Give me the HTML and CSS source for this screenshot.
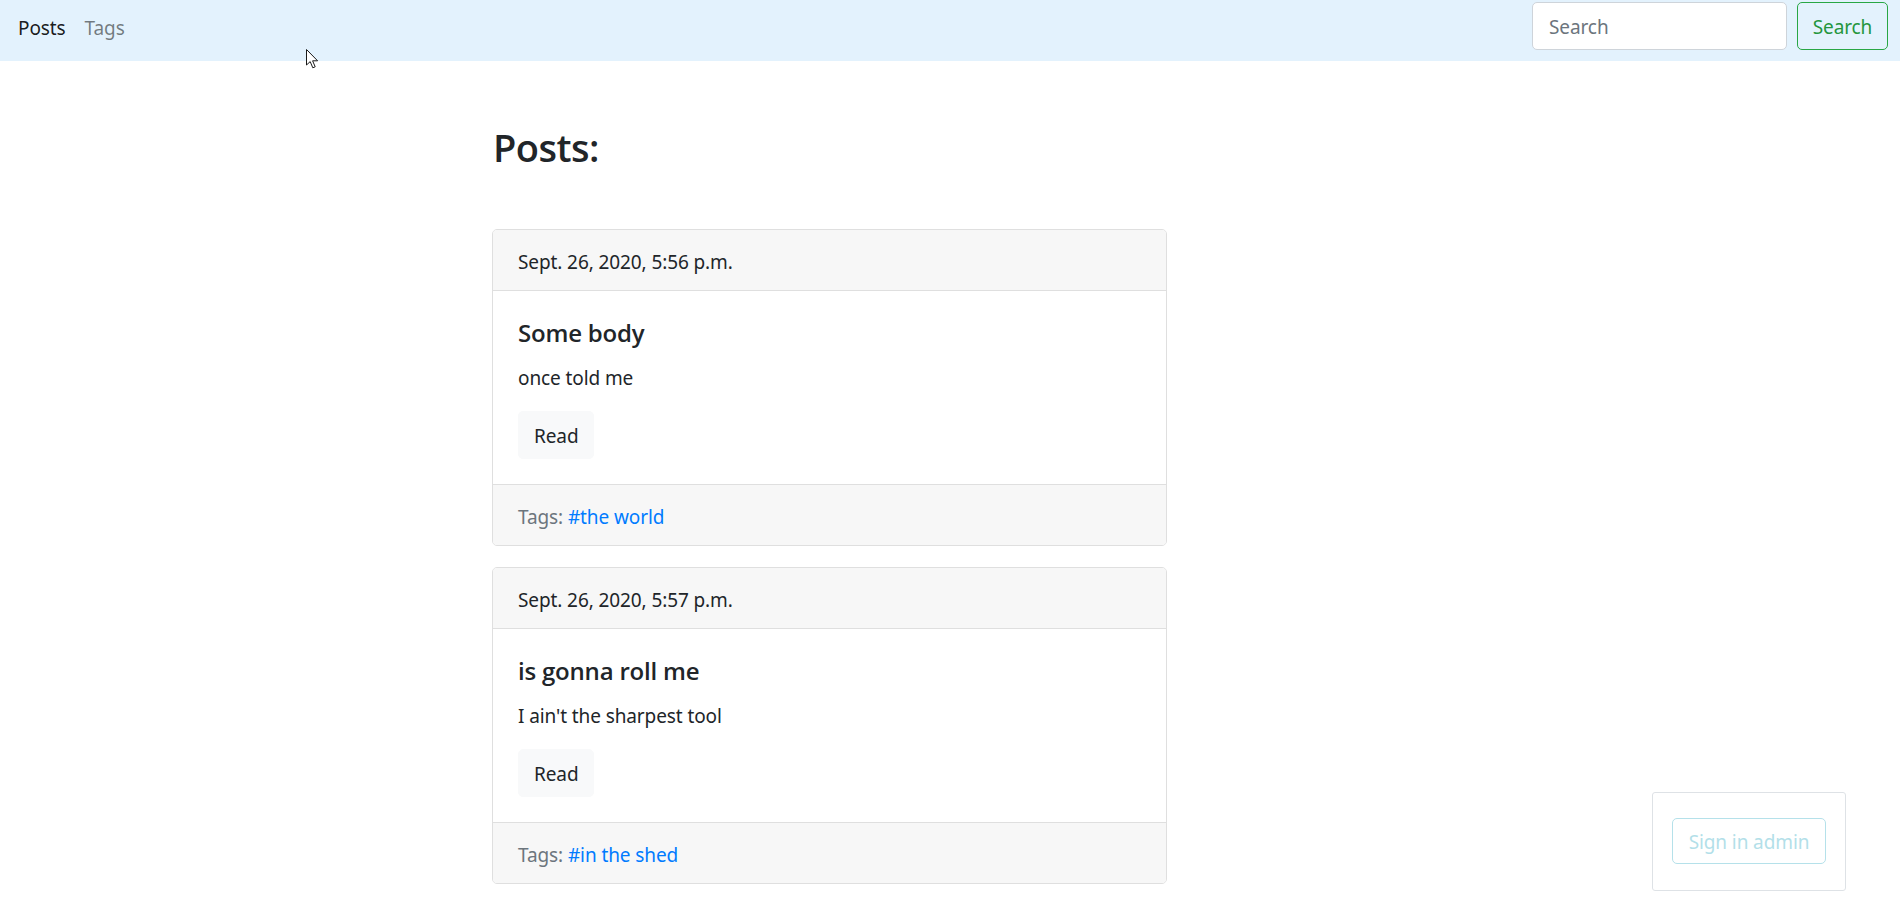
FILE: index.html
```html
<!DOCTYPE html>
<html lang="en">
<head>
<meta charset="utf-8">
<title>Posts</title>
<link rel="stylesheet" href="styles.css">
</head>
<body>
<nav class="navbar">
  <ul class="nav-links">
    <li><a class="nav-link active" href="#">Posts</a></li>
    <li><a class="nav-link" href="#">Tags</a></li>
  </ul>
  <form class="search-form">
    <input class="search-input" type="search" placeholder="Search">
    <button class="search-btn" type="button">Search</button>
  </form>
</nav>

<main class="container">
  <div class="column">
    <h2 class="page-title">Posts:</h2>

    <article class="card">
      <div class="card-header">Sept. 26, 2020, 5:56 p.m.</div>
      <div class="card-body">
        <h5 class="card-title">Some body</h5>
        <p class="card-text">once told me</p>
        <a class="btn-read" href="#">Read</a>
      </div>
      <div class="card-footer">Tags: <a class="tag" href="#">#the world</a></div>
    </article>

    <article class="card">
      <div class="card-header">Sept. 26, 2020, 5:57 p.m.</div>
      <div class="card-body">
        <h5 class="card-title">is gonna roll me</h5>
        <p class="card-text">I ain't the sharpest tool</p>
        <a class="btn-read" href="#">Read</a>
      </div>
      <div class="card-footer">Tags: <a class="tag" href="#">#in the shed</a></div>
    </article>
  </div>
</main>

<div class="admin-box">
  <a class="admin-btn" href="#">Sign in admin</a>
</div>

<svg class="cursor" width="13" height="20" viewBox="0 0 13 20" aria-hidden="true">
  <path d="M0.5 0.5 L0.5 16 L4.2 12.6 L6.8 18.8 L9.2 17.8 L6.6 11.8 L11.6 11.8 Z" fill="#fff" stroke="#1a1a1a" stroke-width="1" stroke-linejoin="round"/>
</svg>
</body>
</html>
```

FILE: styles.css
```css
* {
  box-sizing: border-box;
}

html, body {
  margin: 0;
  padding: 0;
}

body {
  font-family: "Noto Sans", "Open Sans", "Liberation Sans", sans-serif;
  font-size: 19px;
  letter-spacing: -0.1px;
  line-height: 30px;
  color: #212529;
  background: #fff;
}

a {
  text-decoration: none;
}

/* navbar */
.navbar {
  height: 61px;
  background: #e3f2fd;
  display: flex;
  justify-content: space-between;
  align-items: flex-start;
  padding: 2px 12px 0 18px;
}

.nav-links {
  list-style: none;
  margin: 11px 0 0;
  padding: 0;
  display: flex;
  gap: 19px;
}

.nav-link {
  color: rgba(0, 0, 0, 0.5);
  display: block;
  line-height: 30px;
}

.nav-link.active {
  color: rgba(0, 0, 0, 0.9);
}

.search-form {
  display: flex;
  gap: 10px;
}

.search-input {
  width: 255px;
  height: 48px;
  border: 1px solid #ced4da;
  border-radius: 5px;
  padding: 2px 16px 0;
  font: inherit;
  letter-spacing: inherit;
  color: #495057;
  background: #fff;
}

.search-input::placeholder {
  color: #6c757d;
}

.search-btn {
  width: 91px;
  height: 48px;
  border: 1px solid #28a745;
  border-radius: 5px;
  background: transparent;
  color: #24963e;
  font: inherit;
  letter-spacing: inherit;
  padding: 2px 0 0;
}

/* main */
.container {
  width: 1425px;
  margin: 0 auto;
  padding: 62px 0 0 254.5px;
}

.column {
  width: 675px;
}

.page-title {
  font-family: "Open Sans", "Noto Sans", sans-serif;
  font-size: 38px;
  font-weight: 600;
  letter-spacing: -0.5px;
  line-height: 48px;
  margin: 0 0 58px;
  padding-left: 1px;
}

.card {
  border: 1px solid #dfdfdf;
  border-radius: 5px;
  margin-bottom: 21px;
  overflow: hidden;
}

.card-header {
  background: #f7f7f7;
  padding: 17px 25px 13px;
  border-bottom: 1px solid #dfdfdf;
}

.card-body {
  padding: 25px;
}

.card-title {
  font-family: "Open Sans", "Noto Sans", sans-serif;
  font-size: 24px;
  font-weight: 600;
  letter-spacing: -0.2px;
  line-height: 30px;
  padding-top: 2px;
  margin: 0 0 13px;
}

.card-text {
  padding-top: 2px;
  margin: 0 0 18px;
}

.btn-read {
  display: inline-block;
  background: #f8f9fa;
  border: 1px solid #f8f9fa;
  border-radius: 5px;
  color: #212529;
  padding: 9px 15px 7px;
  line-height: 30px;
}

.card-footer {
  background: #f7f7f7;
  padding: 17px 25px 13px;
  border-top: 1px solid #dfdfdf;
  color: #6c757d;
}

.tag {
  color: #007bff;
}

/* admin overlay */
.admin-box {
  position: fixed;
  right: 54px;
  bottom: 9px;
  border: 1px solid #dee2e6;
  border-radius: 3px;
  padding: 25px 19px 26px;
  background: #fff;
}

.admin-btn {
  display: block;
  width: 154px;
  height: 46px;
  border: 1px solid #b5e1ea;
  border-radius: 5px;
  color: #b3dfe9;
  text-align: center;
  line-height: 44px;
  padding-top: 1px;
}

.cursor {
  position: absolute;
  left: 306px;
  top: 49px;
}
```
